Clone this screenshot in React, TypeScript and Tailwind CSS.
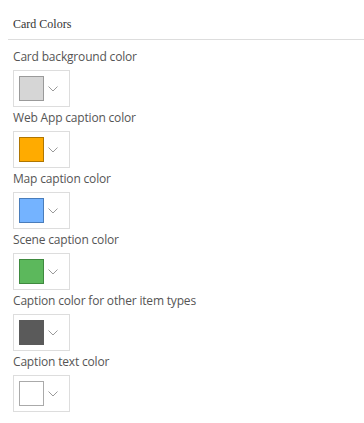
const rows = [
  { label: "Card background color", color: "bg-[#d6d6d6]", border: "border-[#9a9a9a]" },
  { label: "Web App caption color", color: "bg-[#ffab00]", border: "border-[#b07600]" },
  { label: "Map caption color", color: "bg-[#74b3ff]", border: "border-[#4a7dbb]" },
  { label: "Scene caption color", color: "bg-[#5cb85c]", border: "border-[#3f8a3f]" },
  { label: "Caption color for other item types", color: "bg-[#5a5a5a]", border: "border-[#5a5a5a]" },
  { label: "Caption text color", color: "bg-white", border: "border-[#aaaaaa]" },
];

function Chevron() {
  return (
    <svg width="10" height="6" viewBox="0 0 10 6" className="ml-[4px]">
      <path d="M0.5 0.5 L5 5 L9.5 0.5" fill="none" stroke="#9a9a9a" strokeWidth="1" />
    </svg>
  );
}

export default function App() {
  return (
    <div className="w-[364px] h-[423px] bg-white">
      {/* Section heading */}
      <div className="ml-[8px] pl-[5px] pt-[16px] pb-[7px] border-b border-[#dddddd] text-[12px] leading-[16px] text-[#333] font-['Liberation_Serif',serif]">
        Card Colors
      </div>

      <div className="pl-[13px] pt-[9px] font-['Open_Sans',sans-serif] text-[12px] leading-[16px] tracking-[-0.18px] text-[#555]">
        {rows.map((r) => (
          <div key={r.label} className="mb-[3px]">
            <div>{r.label}</div>
            <div className="mt-[5px] w-[57px] h-[37px] border border-[#dddddd] flex items-center pl-[5px]">
              <div className={`w-[25px] h-[25px] border ${r.border} ${r.color}`} />
              <Chevron />
            </div>
          </div>
        ))}
      </div>
    </div>
  );
}
